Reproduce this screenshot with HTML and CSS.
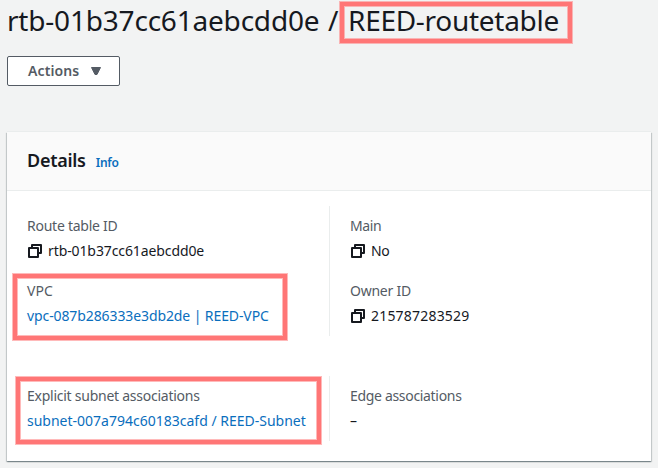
FILE: index.html
```
<!DOCTYPE html>
<html lang="en">
<head>
<meta charset="utf-8">
<title>Route table details</title>
<link rel="stylesheet" href="styles.css">
</head>
<body>
<svg class="sprite" aria-hidden="true">
  <symbol id="copy" viewBox="0 0 14 14"><path d="M4 4V1h9v8h-3M1 4h9v9H1z" fill="none" stroke="currentColor" stroke-width="2" stroke-linejoin="round"/></symbol>
</svg>
<main class="page">
  <h1 class="title"><span class="route-id">rtb-01b37cc61aebcdd0e</span><span class="slash">/</span><span class="marked name">REED-routetable</span></h1>
  <button class="actions" type="button"><span>Actions</span><svg class="caret" viewBox="0 0 10 8"><path d="M.5.5h9L6 7.5H4z" fill="currentColor" stroke="currentColor" stroke-linejoin="round"/></svg></button>
  <section class="card">
    <header class="card-header"><h2>Details</h2><a class="info">Info</a></header>
    <div class="rows">
      <div class="row">
        <div class="column">
          <div class="field"><div class="label">Route table ID</div><div class="value id"><svg class="copy"><use href="#copy"/></svg>rtb-01b37cc61aebcdd0e</div></div>
          <div class="field marked vpc"><div class="label short">VPC</div><a class="value id">vpc-087b286333e3db2de | REED-VPC</a></div>
        </div>
        <div class="column">
          <div class="field"><div class="label main">Main</div><div class="value no"><svg class="copy"><use href="#copy"/></svg>No</div></div>
          <div class="field"><div class="label">Owner ID</div><div class="value digits"><svg class="copy"><use href="#copy"/></svg>215787283529</div></div>
        </div>
      </div>
      <div class="row">
        <div class="column">
          <div class="field marked subnet"><div class="label">Explicit subnet associations</div><a class="value">subnet-007a794c60183cafd / REED-Subnet</a></div>
        </div>
        <div class="column">
          <div class="field"><div class="label edge">Edge associations</div><div class="value">–</div></div>
        </div>
      </div>
    </div>
  </section>
</main>
</body>
</html>
```
FILE: styles.css
```
*, *::after { box-sizing: border-box; }
body {
  margin: 0;
  height: 468px;
  overflow: hidden;
  background: #f2f3f3;
  color: #16191f;
  font: 14px/20px "Noto Sans", sans-serif;
}
.sprite { display: none; }
.page { padding: 2px 7px 0; }
.title {
  display: flex;
  margin: 0;
  height: 36px;
  font-size: 28px;
  font-weight: 400;
  line-height: 36px;
  white-space: nowrap;
}
.route-id { width: 321px; letter-spacing: -.2px; }
.slash { width: 20px; }
.name { letter-spacing: -.28px; }
.actions {
  display: flex;
  align-items: center;
  gap: 12px;
  width: 113px;
  height: 30px;
  margin: 18px 0 0;
  padding: 0 0 0 20px;
  border: 1px solid #545b64;
  border-radius: 2px;
  background: #fff;
  color: #545b64;
  font: 600 14px/20px "Noto Sans", sans-serif;
  letter-spacing: .1px;
}
.caret { width: 10px; height: 8px; }
.card {
  width: 644px;
  height: 329px;
  margin-top: 46px;
  background: #fff;
  box-shadow: 0 1px 1px rgba(0, 28, 36, .3), 1px 1px 1px rgba(0, 28, 36, .15), -1px 1px 1px rgba(0, 28, 36, .15), 0 -1px 0 #eaeded;
}
.card-header {
  display: flex;
  align-items: baseline;
  gap: 10px;
  height: 59px;
  padding: 17px 20px 0;
  border-bottom: 1px solid #eaeded;
  background: #fafafa;
}
h2 { margin: 0; font-size: 18px; font-weight: 600; line-height: 22px; letter-spacing: -.28px; }
.info { color: #0a6ebd; font-size: 12px; font-weight: 600; letter-spacing: -.2px; }
.rows { display: grid; gap: 40px; padding: 15px 20px; }
.row { display: grid; grid-template-columns: 302px 1fr; }
.row:first-child { height: 130px; }
.row:last-child { height: 65px; }
.column { display: grid; gap: 20px; align-content: center; }
.column + .column { padding-left: 20px; border-left: 1px solid #eaeded; }
.field { display: grid; gap: 5px; height: 45px; }
.label { color: #545b64; letter-spacing: -.25px; }
.short { letter-spacing: .09px; }
.main { letter-spacing: -.4px; }
.edge { letter-spacing: -.32px; }
.value { display: flex; align-items: center; gap: 6px; white-space: nowrap; }
.id { letter-spacing: -.1px; }
.no { letter-spacing: -.5px; }
.digits { letter-spacing: .2px; }
a.value { color: #0a6ebd; }
.copy { width: 14px; height: 14px; margin-left: 1px; }
.marked { position: relative; }
.marked::after {
  content: "";
  position: absolute;
  border: 4px solid #ff7676;
  box-shadow: 0 0 0 1px rgba(255, 118, 118, .5), inset 0 0 0 1px rgba(255, 118, 118, .5);
  pointer-events: none;
}
.name::after { left: -8px; top: 0; width: 232px; height: 41px; }
.vpc::after { left: -14px; top: -7px; width: 274px; height: 66px; }
.subnet::after { left: -11px; top: -9px; width: 305px; height: 67px; }
```
